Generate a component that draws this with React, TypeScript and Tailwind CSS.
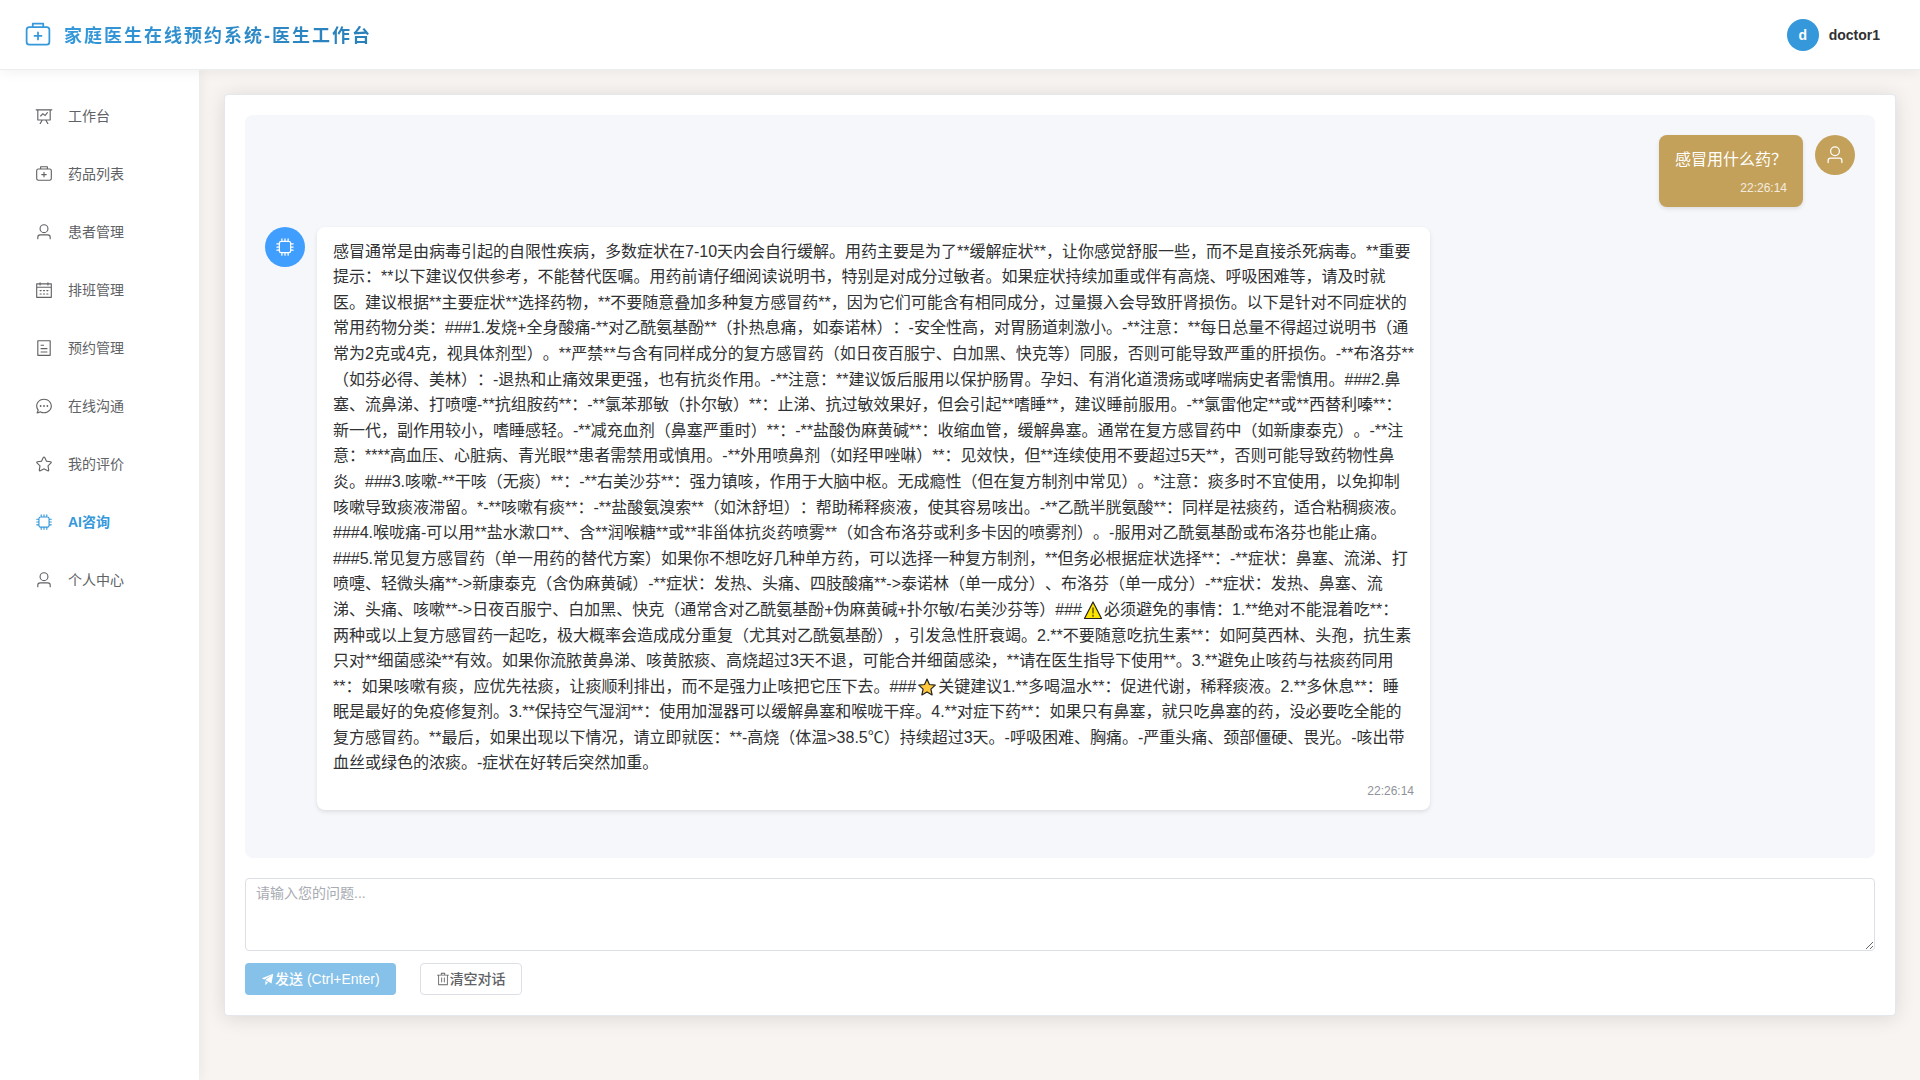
import { useState } from 'react';

type IconProps = { className?: string };

const ICONS = {
  kit: 'M192 256a64 64 0 0 0-64 64v448a64 64 0 0 0 64 64h640a64 64 0 0 0 64-64V320a64 64 0 0 0-64-64zm0-64h640a128 128 0 0 1 128 128v448a128 128 0 0 1-128 128H192A128 128 0 0 1 64 768V320a128 128 0 0 1 128-128M544 512h96a32 32 0 0 1 0 64h-96v96a32 32 0 0 1-64 0v-96h-96a32 32 0 0 1 0-64h96v-96a32 32 0 0 1 64 0zM352 128v64h320v-64zm-32-64h384a32 32 0 0 1 32 32v128a32 32 0 0 1-32 32H320a32 32 0 0 1-32-32V96a32 32 0 0 1 32-32',
  board:
    'M359.168 768H160a32 32 0 0 1-32-32V192H64a32 32 0 0 1 0-64h896a32 32 0 1 1 0 64h-64v544a32 32 0 0 1-32 32H665.216l110.848 192h-73.856L591.36 768H433.024L322.176 960H248.32zM832 192H192v512h640zM342.656 534.656a32 32 0 1 1-45.312-45.312L444.992 341.76l125.44 94.08L679.04 300.032a32 32 0 1 1 49.92 39.936L581.632 524.224 451.008 426.24z',
  user: 'M512 512a192 192 0 1 0 0-384 192 192 0 0 0 0 384m0 64a256 256 0 1 1 0-512 256 256 0 0 1 0 512m320 320v-96a96 96 0 0 0-96-96H288a96 96 0 0 0-96 96v96a32 32 0 1 1-64 0v-96a160 160 0 0 1 160-160h448a160 160 0 0 1 160 160v96a32 32 0 1 1-64 0',
  calendar:
    'M128 384v512h768V192H768v32a32 32 0 1 1-64 0v-32H320v32a32 32 0 0 1-64 0v-32H128v128h768v64zm192-256h384V96a32 32 0 1 1 64 0v32h160a32 32 0 0 1 32 32v768a32 32 0 0 1-32 32H96a32 32 0 0 1-32-32V160a32 32 0 0 1 32-32h160V96a32 32 0 0 1 64 0zm-32 384h64a32 32 0 0 1 0 64h-64a32 32 0 0 1 0-64m0 192h64a32 32 0 1 1 0 64h-64a32 32 0 1 1 0-64m192-192h64a32 32 0 0 1 0 64h-64a32 32 0 0 1 0-64m0 192h64a32 32 0 1 1 0 64h-64a32 32 0 1 1 0-64m192-192h64a32 32 0 1 1 0 64h-64a32 32 0 1 1 0-64m0 192h64a32 32 0 1 1 0 64h-64a32 32 0 1 1 0-64',
  tickets:
    'M192 128v768h640V128zm-32-64h704a32 32 0 0 1 32 32v832a32 32 0 0 1-32 32H160a32 32 0 0 1-32-32V96a32 32 0 0 1 32-32m160 448h384v64H320zm0-192h192v64H320zm0 384h384v64H320z',
  chat: 'm174.72 855.68 135.296-45.12 23.68 11.84C388.096 849.536 448.576 864 512 864c211.84 0 384-166.784 384-352S723.84 160 512 160 128 326.784 128 512c0 69.12 24.96 139.264 70.848 199.232l22.08 28.8-46.272 115.584zm-45.248 82.56A32 32 0 0 1 89.6 896l58.368-145.92C94.72 680.32 64 596.864 64 512 64 299.904 256 96 512 96s448 203.904 448 416-192 416-448 416a461.056 461.056 0 0 1-206.912-48.384l-175.616 58.56zM512 563.2a51.2 51.2 0 1 1 0-102.4 51.2 51.2 0 0 1 0 102.4m192 0a51.2 51.2 0 1 1 0-102.4 51.2 51.2 0 0 1 0 102.4m-384 0a51.2 51.2 0 1 1 0-102.4 51.2 51.2 0 0 1 0 102.4',
  star: 'm512 747.84 228.16 119.936a6.4 6.4 0 0 0 9.28-6.72l-43.52-254.08 184.512-179.904a6.4 6.4 0 0 0-3.52-10.88l-255.104-37.12L517.76 147.904a6.4 6.4 0 0 0-11.52 0L392.192 379.072l-255.104 37.12a6.4 6.4 0 0 0-3.52 10.88L318.08 606.976l-43.584 254.08a6.4 6.4 0 0 0 9.28 6.72zM313.6 924.48a70.4 70.4 0 0 1-102.144-74.24l37.888-220.928L88.96 472.96A70.4 70.4 0 0 1 128 352.896l221.76-32.256 99.2-200.96a70.4 70.4 0 0 1 126.208 0l99.2 200.96 221.824 32.256a70.4 70.4 0 0 1 39.04 120.064L774.72 629.376l37.888 220.928a70.4 70.4 0 0 1-102.144 74.24L512 820.096l-198.4 104.32z',
  cpu: 'M320 256a64 64 0 0 0-64 64v384a64 64 0 0 0 64 64h384a64 64 0 0 0 64-64V320a64 64 0 0 0-64-64zm0-64h384a128 128 0 0 1 128 128v384a128 128 0 0 1-128 128H320a128 128 0 0 1-128-128V320a128 128 0 0 1 128-128M512 64a32 32 0 0 1 32 32v128h-64V96a32 32 0 0 1 32-32m160 0a32 32 0 0 1 32 32v128h-64V96a32 32 0 0 1 32-32m-320 0a32 32 0 0 1 32 32v128h-64V96a32 32 0 0 1 32-32m160 896a32 32 0 0 1-32-32V800h64v128a32 32 0 0 1-32 32m160 0a32 32 0 0 1-32-32V800h64v128a32 32 0 0 1-32 32m-320 0a32 32 0 0 1-32-32V800h64v128a32 32 0 0 1-32 32M64 512a32 32 0 0 1 32-32h128v64H96a32 32 0 0 1-32-32m0-160a32 32 0 0 1 32-32h128v64H96a32 32 0 0 1-32-32m0 320a32 32 0 0 1 32-32h128v64H96a32 32 0 0 1-32-32m896-160a32 32 0 0 1-32 32H800v-64h128a32 32 0 0 1 32 32m0-160a32 32 0 0 1-32 32H800v-64h128a32 32 0 0 1 32 32m0 320a32 32 0 0 1-32 32H800v-64h128a32 32 0 0 1 32 32',
  send: 'm64 448 832-320-128 704-446.08-243.328L832 192 242.816 545.472zm256 512V657.024L512 768z',
  trash:
    'M160 256H96a32 32 0 0 1 0-64h256V95.936a32 32 0 0 1 32-32h256a32 32 0 0 1 32 32V192h256a32 32 0 1 1 0 64h-64v672a32 32 0 0 1-32 32H192a32 32 0 0 1-32-32zm448-64v-64H416v64zM224 896h576V256H224zm192-128a32 32 0 0 1-32-32V416a32 32 0 0 1 64 0v320a32 32 0 0 1-32 32m192 0a32 32 0 0 1-32-32V416a32 32 0 0 1 64 0v320a32 32 0 0 1-32 32',
};

type IconName = keyof typeof ICONS;

const MENU: { label: string; icon: IconName }[] = [
  { label: '工作台', icon: 'board' },
  { label: '药品列表', icon: 'kit' },
  { label: '患者管理', icon: 'user' },
  { label: '排班管理', icon: 'calendar' },
  { label: '预约管理', icon: 'tickets' },
  { label: '在线沟通', icon: 'chat' },
  { label: '我的评价', icon: 'star' },
  { label: 'AI咨询', icon: 'cpu' },
  { label: '个人中心', icon: 'user' },
];

const ANSWER =
  '感冒通常是由病毒引起的自限性疾病，多数症状在7-10天内会自行缓解。用药主要是为了**缓解症状**，让你感觉舒服一些，而不是直接杀死病毒。' +
  '**重要提示：**以下建议仅供参考，不能替代医嘱。用药前请仔细阅读说明书，特别是对成分过敏者。如果症状持续加重或伴有高烧、呼吸困难等，请及时就医。' +
  '建议根据**主要症状**选择药物，**不要随意叠加多种复方感冒药**，因为它们可能含有相同成分，过量摄入会导致肝肾损伤。以下是针对不同症状的常用药物分类：' +
  '###1.发烧+全身酸痛-**对乙酰氨基酚**（扑热息痛，如泰诺林）：-安全性高，对胃肠道刺激小。-**注意：**每日总量不得超过说明书（通常为2克或4克，视具体剂型）。' +
  '**严禁**与含有同样成分的复方感冒药（如日夜百服宁、白加黑、快克等）同服，否则可能导致严重的肝损伤。' +
  '-**布洛芬**（如芬必得、美林）：-退热和止痛效果更强，也有抗炎作用。-**注意：**建议饭后服用以保护肠胃。孕妇、有消化道溃疡或哮喘病史者需慎用。' +
  '###2.鼻塞、流鼻涕、打喷嚏-**抗组胺药**：-**氯苯那敏（扑尔敏）**：止涕、抗过敏效果好，但会引起**嗜睡**，建议睡前服用。' +
  '-**氯雷他定**或**西替利嗪**：新一代，副作用较小，嗜睡感轻。-**减充血剂（鼻塞严重时）**：-**盐酸伪麻黄碱**：收缩血管，缓解鼻塞。通常在复方感冒药中（如新康泰克）。' +
  '-**注意：****高血压、心脏病、青光眼**患者需禁用或慎用。-**外用喷鼻剂（如羟甲唑啉）**：见效快，但**连续使用不要超过5天**，否则可能导致药物性鼻炎。' +
  '###3.咳嗽-**干咳（无痰）**：-**右美沙芬**：强力镇咳，作用于大脑中枢。无成瘾性（但在复方制剂中常见）。*注意：痰多时不宜使用，以免抑制咳嗽导致痰液滞留。*' +
  '-**咳嗽有痰**：-**盐酸氨溴索**（如沐舒坦）：帮助稀释痰液，使其容易咳出。-**乙酰半胱氨酸**：同样是祛痰药，适合粘稠痰液。' +
  '###4.喉咙痛-可以用**盐水漱口**、含**润喉糖**或**非甾体抗炎药喷雾**（如含布洛芬或利多卡因的喷雾剂）。-服用对乙酰氨基酚或布洛芬也能止痛。' +
  '###5.常见复方感冒药（单一用药的替代方案）如果你不想吃好几种单方药，可以选择一种复方制剂，**但务必根据症状选择**：' +
  '-**症状：鼻塞、流涕、打喷嚏、轻微头痛**->新康泰克（含伪麻黄碱）-**症状：发热、头痛、四肢酸痛**->泰诺林（单一成分）、布洛芬（单一成分）' +
  '-**症状：发热、鼻塞、流涕、头痛、咳嗽**->日夜百服宁、白加黑、快克（通常含对乙酰氨基酚+伪麻黄碱+扑尔敏/右美沙芬等）' +
  '###⚠必须避免的事情：1.**绝对不能混着吃**：两种或以上复方感冒药一起吃，极大概率会造成成分重复（尤其对乙酰氨基酚），引发急性肝衰竭。' +
  '2.**不要随意吃抗生素**：如阿莫西林、头孢，抗生素只对**细菌感染**有效。如果你流脓黄鼻涕、咳黄脓痰、高烧超过3天不退，可能合并细菌感染，**请在医生指导下使用**。' +
  '3.**避免止咳药与祛痰药同用**：如果咳嗽有痰，应优先祛痰，让痰顺利排出，而不是强力止咳把它压下去。' +
  '###⭐关键建议1.**多喝温水**：促进代谢，稀释痰液。2.**多休息**：睡眠是最好的免疫修复剂。3.**保持空气湿润**：使用加湿器可以缓解鼻塞和喉咙干痒。' +
  '4.**对症下药**：如果只有鼻塞，就只吃鼻塞的药，没必要吃全能的复方感冒药。**最后，如果出现以下情况，请立即就医：**' +
  '-高烧（体温>38.5℃）持续超过3天。-呼吸困难、胸痛。-严重头痛、颈部僵硬、畏光。-咳出带血丝或绿色的浓痰。-症状在好转后突然加重。';

const MESSAGES = [
  { role: 'user', text: '感冒用什么药？', time: '22:26:14' },
  { role: 'ai', text: ANSWER, time: '22:26:14' },
];

function Icon({ name, className }: IconProps & { name: IconName }) {
  return (
    <svg viewBox="0 0 1024 1024" fill="currentColor" aria-hidden="true" className={className}>
      <path d={ICONS[name]} />
    </svg>
  );
}

function WarningEmoji() {
  return (
    <svg viewBox="0 0 22 20" role="img" aria-label="警告" className="inline h-5 w-[22px] align-[-5px]">
      <path d="M11 2 19.5 18.5H2.5Z" fill="#fde300" stroke="#222" strokeWidth="1.2" strokeLinejoin="round" />
      <path d="M10 7.5h2v6h-2zM10 14.8h2v2h-2z" fill="#8a7a00" />
    </svg>
  );
}

function StarEmoji() {
  return (
    <svg viewBox="0 0 22 20" role="img" aria-label="星" className="inline h-5 w-[22px] align-[-5px]">
      <path
        d="m11 2 2.4 5.5 5.9.6-4.4 4 1.2 5.8-5.1-3-5.1 3 1.2-5.8-4.4-4 5.9-.6Z"
        fill="#ffc83d"
        stroke="#222"
        strokeWidth="1.2"
        strokeLinejoin="round"
      />
    </svg>
  );
}

function MessageText({ text }: { text: string }) {
  return (
    <>
      {text.split(/(⚠|⭐)/).map((part, i) => {
        if (part === '⚠') return <WarningEmoji key={i} />;
        if (part === '⭐') return <StarEmoji key={i} />;
        return part;
      })}
    </>
  );
}

function Message({ role, text, time }: { role: string; text: string; time: string }) {
  const isUser = role === 'user';
  return (
    <div className={`flex items-start gap-3 ${isUser ? 'flex-row-reverse' : ''}`}>
      <div
        className={`flex size-10 shrink-0 items-center justify-center rounded-full text-white ${
          isUser ? 'bg-[#c4a15a]' : 'bg-[#409eff]'
        }`}
      >
        <Icon name={isUser ? 'user' : 'cpu'} className="size-5" />
      </div>
      <div
        className={`max-w-[70%] rounded-lg px-4 py-3 shadow-[0_2px_4px_rgba(0,0,0,0.1)] ${
          isUser ? 'bg-[#c4a15a] text-white' : 'bg-white text-[#303133]'
        }`}
      >
        <p className="text-base leading-[1.6] break-words [text-spacing-trim:space-all]">
          <MessageText text={text} />
        </p>
        <div className={`mt-2 text-right text-xs leading-[14px] ${isUser ? 'text-white/80' : 'text-[#909399]'}`}>
          {time}
        </div>
      </div>
    </div>
  );
}

export default function App() {
  const [active, setActive] = useState('AI咨询');
  const [question, setQuestion] = useState('');
  const [messages, setMessages] = useState(MESSAGES);

  const handleSend = () => {
    if (!question.trim()) return;
    const time = new Date().toTimeString().slice(0, 8);
    setMessages((prev) => [...prev, { role: 'user', text: question.trim(), time }]);
    setQuestion('');
  };

  return (
    <div
      lang="zh-CN"
      className="flex min-h-screen flex-col bg-[#f8f4f1] font-['Liberation_Sans','Noto_Sans_CJK_SC',sans-serif] text-sm text-[#303133]"
    >
      <header className="relative z-10 flex h-[70px] items-center justify-between border-b border-[#ebeeee] bg-white pr-10 pl-6 shadow-[0_2px_12px_rgba(0,0,0,0.06)]">
        <div className="flex items-center gap-3">
          <Icon name="kit" className="size-7 text-[#3498db]" />
          <h1 className="bg-linear-to-r from-[#3498db] to-[#2980b9] bg-clip-text pt-0.5 text-lg font-bold tracking-[2px] text-transparent">
            家庭医生在线预约系统-医生工作台
          </h1>
        </div>
        <div className="flex items-center gap-[10px] font-bold">
          <span className="flex size-8 items-center justify-center rounded-full bg-[#3498db] text-white">d</span>
          <span>doctor1</span>
        </div>
      </header>

      <div className="flex flex-1">
        <aside className="w-[199px] shrink-0 bg-white pt-[21px] shadow-[2px_0_12px_rgba(0,0,0,0.06)]">
          <nav className="flex flex-col gap-2">
            {MENU.map((item) => (
              <a
                key={item.label}
                href="#"
                onClick={() => setActive(item.label)}
                className={`flex h-[50px] items-center gap-[15px] pl-[35px] ${
                  active === item.label ? 'font-bold text-[#3498db]' : 'text-[#606266]'
                }`}
              >
                <Icon name={item.icon} className="size-[18px]" />
                {item.label}
              </a>
            ))}
          </nav>
        </aside>

        <main className="min-w-0 flex-1 pt-6 pr-6 pb-16 pl-[25px]">
          <section className="rounded border border-[#e4e7ed] bg-white p-5 shadow-[0_2px_20px_rgba(0,0,0,0.12)]">
            <div className="flex flex-col gap-5 rounded-lg bg-[#f5f7fb] px-5 pt-5 pb-12">
              {messages.map((message, i) => (
                <Message key={i} {...message} />
              ))}
            </div>

            <textarea
              aria-label="您的问题"
              value={question}
              onChange={(e) => setQuestion(e.target.value)}
              onKeyDown={(e) => {
                if (e.ctrlKey && e.key === 'Enter') handleSend();
              }}
              placeholder="请输入您的问题..."
              className="mt-5 block h-[73px] w-full resize-y rounded border border-[#dcdfe6] bg-white px-[10px] py-1 leading-5 outline-none placeholder:text-[#a8abb2] focus:border-[#3498db]"
            />
            <div className="mt-3 flex gap-6">
              <button
                type="button"
                disabled={!question.trim()}
                onClick={handleSend}
                className="flex h-8 items-center rounded bg-[#3498db] px-4 font-medium text-white disabled:bg-[#85c1e9]"
              >
                <Icon name="send" className="size-[14px]" />
                发送 (Ctrl+Enter)
              </button>
              <button
                type="button"
                onClick={() => setMessages([])}
                className="flex h-8 items-center rounded border border-[#dcdfe6] bg-white px-[15px] font-medium text-[#606266]"
              >
                <Icon name="trash" className="size-[14px]" />
                清空对话
              </button>
            </div>
          </section>
        </main>
      </div>
    </div>
  );
}
